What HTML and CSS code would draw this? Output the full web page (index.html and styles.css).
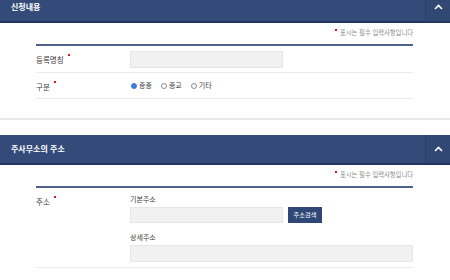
FILE: index.html
```html
<!DOCTYPE html>
<html lang="ko">
<head>
<meta charset="utf-8">
<link rel="stylesheet" href="styles.css">
</head>
<body>
<div class="page">
  <section class="section">
    <div class="sec-head">
      <h2 class="sec-title">신청내용</h2>
      <div class="sec-toggle"><svg width="9" height="6" viewBox="0 0 9 6"><path d="M1 5 L4.5 1.5 L8 5" fill="none" stroke="#ffffff" stroke-width="1.6"/></svg></div>
    </div>
    <div class="sec-body">
      <div class="note"><span class="dot"></span>표시는 필수 입력사항입니다</div>
      <div class="form">
        <div class="row">
          <div class="label req">등록명칭</div>
          <div class="field"><div class="input short"></div></div>
        </div>
        <div class="row">
          <div class="label req">구분</div>
          <div class="field radios">
            <span class="radio on"></span><span class="rtext">종중</span>
            <span class="radio"></span><span class="rtext">종교</span>
            <span class="radio"></span><span class="rtext">기타</span>
          </div>
        </div>
      </div>
    </div>
  </section>
  <section class="section">
    <div class="sec-head">
      <h2 class="sec-title">주사무소의 주소</h2>
      <div class="sec-toggle"><svg width="9" height="6" viewBox="0 0 9 6"><path d="M1 5 L4.5 1.5 L8 5" fill="none" stroke="#ffffff" stroke-width="1.6"/></svg></div>
    </div>
    <div class="sec-body">
      <div class="note"><span class="dot"></span>표시는 필수 입력사항입니다</div>
      <div class="form">
        <div class="row addr">
          <div class="label req">주소</div>
          <div class="field stack">
            <div class="sub">기본주소</div>
            <div class="inline"><div class="input short"></div><div class="btn">주소검색</div></div>
            <div class="sub">상세주소</div>
            <div class="input long"></div>
          </div>
        </div>
      </div>
    </div>
  </section>
</div>
</body>
</html>
```

FILE: styles.css
```css
* { box-sizing: border-box; margin: 0; padding: 0; }
body {
  margin: 0;
  background: #ffffff;
  font-family: "Noto Sans CJK KR", "Noto Sans", sans-serif;
  color: #444;
  width: 450px;
  height: 280px;
  overflow: hidden;
}
.page { margin-top: -7px; }
.section { border-bottom: 2px solid #e8e8e8; padding-bottom: 19px; margin-bottom: 15px; }
.sec-head {
  height: 30px;
  background: #344b79;
  border-bottom: 2px solid #23375e;
  display: flex;
  align-items: center;
  justify-content: space-between;
}
.sec-title {
  font-size: 8px;
  font-weight: 700;
  color: #ffffff;
  padding-left: 11px;
  line-height: 1;
}
.sec-toggle {
  width: 25px;
  height: 100%;
  background: #314875;
  border-left: 1px solid #2a3f69;
  display: flex;
  align-items: center;
  justify-content: center;
}
.sec-body { padding: 0 37px 0 36px; }
.note {
  display: flex;
  justify-content: flex-end;
  align-items: center;
  font-size: 6.3px;
  color: #8a8a8a;
  height: 21px;
  line-height: 1;
  padding-bottom: 1px;
}
.dot {
  display: inline-block;
  width: 2px;
  height: 2px;
  background: #e0151b;
  margin-right: 3px;
  align-self: center;
  margin-top: -6px;
}
.form { border-top: 2px solid #50628c; }
.row {
  display: flex;
  align-items: center;
  border-bottom: 1px solid #ebebeb;
  height: 27px;
}
.row + .row { height: 26px; }
.label {
  width: 94px;
  font-size: 7.5px;
  color: #3c3c3c;
  line-height: 1;
}
.label.req::after {
  content: "";
  display: inline-block;
  width: 2px;
  height: 2px;
  background: #e0151b;
  margin-left: 4px;
  vertical-align: 7px;
}
.field { flex: 1; display: flex; align-items: center; }
.input {
  height: 17px;
  background: #f1f1f1;
  border: 1px solid #e6e6e6;
}
.input.short { width: 153px; }
.input.long { width: 100%; }
.radios { font-size: 7px; color: #3c3c3c; line-height: 1; }
.radio {
  width: 6px;
  height: 6px;
  border-radius: 50%;
  border: 1px solid #8c8c8c;
  background: #fff;
  margin-left: 1px;
  margin-right: 2px;
}
.radio.on { border-color: #3a7be0; background: #3a7be0; }
.rtext { margin-right: 8px; }
.row.addr { height: auto; align-items: flex-start; padding: 5px 0 5px; }
.row.addr .label { padding-top: 3px; }
.stack { flex-direction: column; align-items: stretch; }
.sub { font-size: 7px; color: #3c3c3c; line-height: 12px; height: 12px; }
.inline { display: flex; align-items: center; gap: 5px; margin: 2px 0 8px; }
.inline .input { height: 16px; }
.btn {
  width: 34px;
  height: 16px;
  background: #2f4777;
  color: #fff;
  font-size: 6.2px;
  display: flex;
  align-items: center;
  justify-content: center;
  line-height: 1;
}
.stack .input.long { margin-top: 2px; height: 17px; }
```
